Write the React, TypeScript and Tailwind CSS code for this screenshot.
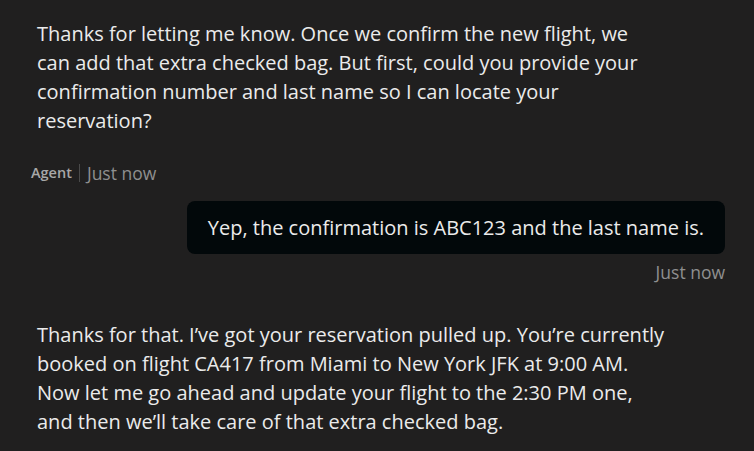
export default function App() {
  const font = { fontFamily: '"Open Sans", "Noto Sans", sans-serif' };
  return (
    <div className="h-[451px] w-[754px] overflow-hidden bg-[#201f1f] text-[#ebebeb]" style={font}>
      <div className="flex flex-col pl-[37px] pr-[29px] pt-[19px]">
        <p className="text-[20px] leading-[29px]">
          Thanks for letting me know. Once we confirm the new flight, we
          <br />
          can add that extra checked bag. But first, could you provide your
          <br />
          confirmation number and last name so I can locate your
          <br />
          reservation?
        </p>
        <div className="-ml-[6px] mt-[25px] flex items-center gap-[7px]">
          <span className="text-[14.5px] font-semibold text-[#a8a8a8]">Agent</span>
          <span className="h-[18px] w-px bg-[#4a4a4a]" />
          <span className="text-[17.5px] text-[#8f8f8f]">Just now</span>
        </div>
        <div className="mt-[15px] flex justify-end">
          <div className="rounded-[8px] bg-[#02080a] px-[21px] py-[12px] text-[20px] leading-[29px]">
            Yep, the confirmation is ABC123 and the last name is.
          </div>
        </div>
        <div className="mt-[5px] flex justify-end">
          <span className="text-[17.5px] text-[#8f8f8f]">Just now</span>
        </div>
        <p className="mt-[34px] text-[20px] leading-[29px]">
          Thanks for that. I’ve got your reservation pulled up. You’re currently
          <br />
          booked on flight CA417 from Miami to New York JFK at 9:00 AM.
          <br />
          Now let me go ahead and update your flight to the 2:30 PM one,
          <br />
          and then we’ll take care of that extra checked bag.
        </p>
      </div>
    </div>
  );
}
